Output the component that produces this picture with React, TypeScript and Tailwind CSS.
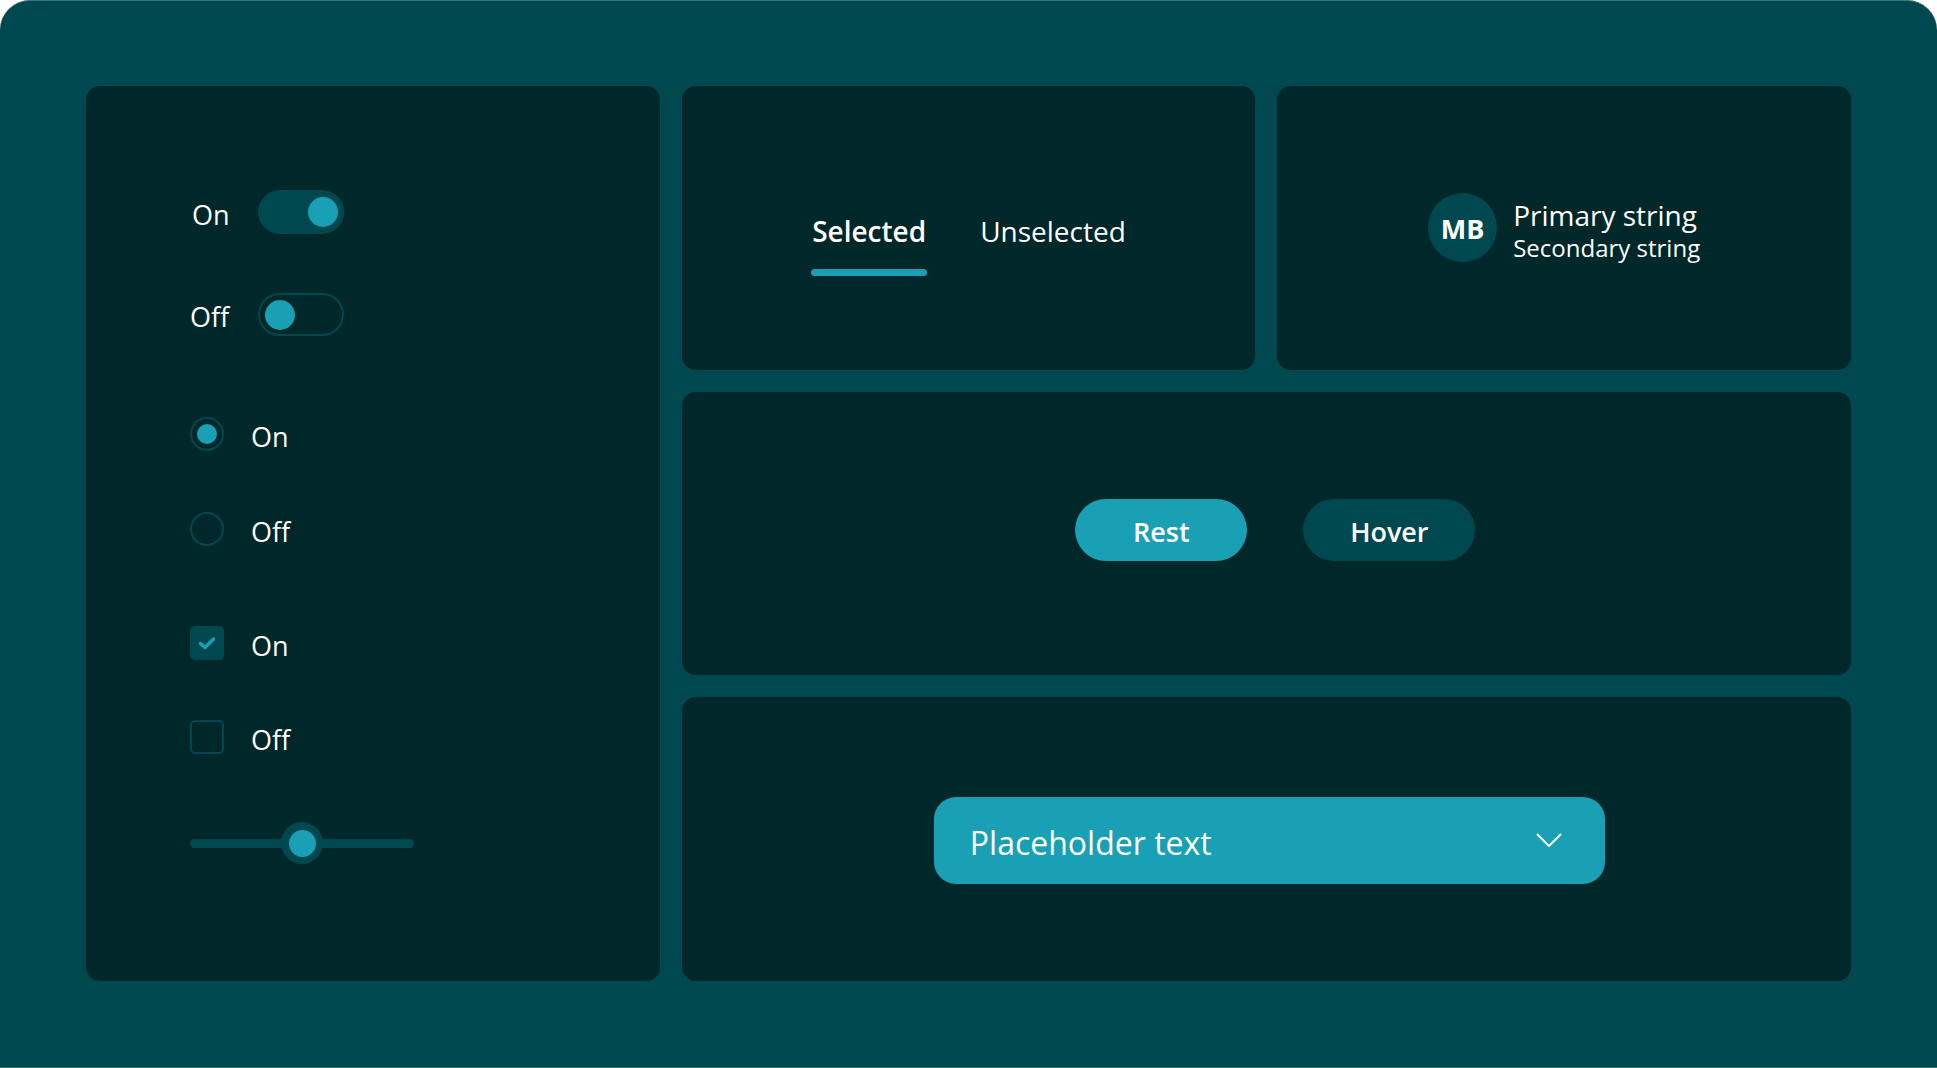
export default function App() {
  return (
    <div className="h-[1068px] w-full overflow-hidden rounded-t-[30px] border-y border-[#3a7479] bg-[#00484f] font-['Open_Sans',sans-serif] text-white">
      <div className="grid h-full grid-cols-3 grid-rows-3 gap-[22px] px-[86px] pb-[86px] pt-[85px]">
        {/* controls column */}
        <div className="row-span-3 rounded-[14px] bg-[#00272a] pl-[104px] pt-[104px]">
          <div className="flex h-[44px] items-center">
            <span className="mt-[6px] w-[68px] pl-[2px] text-[27px]">On</span>
            <div className="flex h-[44px] w-[86px] items-center justify-end rounded-full bg-[#00484f] pr-[6px]">
              <div className="h-[30px] w-[30px] rounded-full bg-[#19a0b4]" />
            </div>
          </div>
          <div className="mt-[59px] flex h-[43px] items-center">
            <span className="mt-[6px] w-[68px] text-[27px]">Off</span>
            <div className="flex h-[43px] w-[86px] items-center rounded-full border-2 border-[#00484f] pl-[5px]">
              <div className="h-[30px] w-[30px] rounded-full bg-[#19a0b4]" />
            </div>
          </div>

          <div className="mt-[81px] flex h-[34px] items-center">
            <div className="flex h-[34px] w-[34px] items-center justify-center rounded-full border-2 border-[#00484f]">
              <div className="h-[20px] w-[20px] rounded-full bg-[#19a0b4]" />
            </div>
            <span className="ml-[27px] mt-[6px] text-[27px]">On</span>
          </div>
          <div className="mt-[61px] flex h-[34px] items-center">
            <div className="h-[34px] w-[34px] rounded-full border-2 border-[#00484f]" />
            <span className="ml-[27px] mt-[6px] text-[27px]">Off</span>
          </div>

          <div className="mt-[80px] flex h-[34px] items-center">
            <div className="flex h-[34px] w-[34px] items-center justify-center rounded-[5px] bg-[#00484f]">
              <svg width="20" height="16" viewBox="0 0 20 16" fill="none">
                <path d="M3.5 8.5 L8 12.5 L16.5 4" stroke="#19a0b4" strokeWidth="3.5" strokeLinecap="round" strokeLinejoin="round" />
              </svg>
            </div>
            <span className="ml-[27px] mt-[6px] text-[27px]">On</span>
          </div>
          <div className="mt-[60px] flex h-[34px] items-center">
            <div className="h-[34px] w-[34px] rounded-[5px] border-2 border-[#00484f]" />
            <span className="ml-[27px] mt-[6px] text-[27px]">Off</span>
          </div>

          <div className="relative mt-[68px] flex h-[42px] w-[224px] items-center">
            <div className="h-[9px] w-full rounded-full bg-[#00484f]" />
            <div className="absolute left-[91px] top-0 flex h-[42px] w-[42px] items-center justify-center rounded-full bg-[#00484f]">
              <div className="h-[27px] w-[27px] rounded-full bg-[#19a0b4]" />
            </div>
          </div>
        </div>

        {/* tabs */}
        <div className="flex justify-center rounded-[14px] bg-[#00272a] pt-[126px]">
          <div className="flex gap-[53px]">
            <div className="flex flex-col items-center">
              <span className="text-[28px] font-semibold leading-[38px]">Selected</span>
              <div className="mt-[19px] h-[7px] w-[116px] rounded-full bg-[#19a0b4]" />
            </div>
            <span className="text-[28px] leading-[38px]">Unselected</span>
          </div>
        </div>

        {/* persona */}
        <div className="flex items-center justify-center rounded-[14px] bg-[#00272a]">
          <div className="flex items-center gap-[16px]">
            <div className="flex h-[69px] w-[69px] items-center justify-center rounded-full bg-[#00484f] pt-[2px] text-[27px] font-bold">
              MB
            </div>
            <div className="flex flex-col pt-[8px]">
              <span className="text-[28px] leading-[32px]">Primary string</span>
              <span className="text-[24px] leading-[34px]">Secondary string</span>
            </div>
          </div>
        </div>

        {/* buttons */}
        <div className="col-span-2 flex items-center justify-center gap-[56px] rounded-[14px] bg-[#00272a] pb-[6px] pl-[18px]">
          <button className="h-[62px] w-[172px] rounded-full bg-[#19a0b4] pt-[3px] text-[27px] font-semibold">Rest</button>
          <button className="h-[62px] w-[172px] rounded-full bg-[#00484f] pt-[3px] text-[27px] font-semibold">Hover</button>
        </div>

        {/* dropdown */}
        <div className="col-span-2 flex items-center justify-center rounded-[14px] bg-[#00272a] pl-[6px] pt-[2px]">
          <div className="flex h-[87px] w-[671px] items-center justify-between rounded-[22px] bg-[#19a0b4] pl-[36px] pr-[43px]">
            <span className="pt-[6px] text-[32px]">Placeholder text</span>
            <svg width="26" height="14" viewBox="0 0 26 14" fill="none">
              <path d="M1 1 L13 13 L25 1" stroke="white" strokeWidth="2" />
            </svg>
          </div>
        </div>
      </div>
    </div>
  );
}
